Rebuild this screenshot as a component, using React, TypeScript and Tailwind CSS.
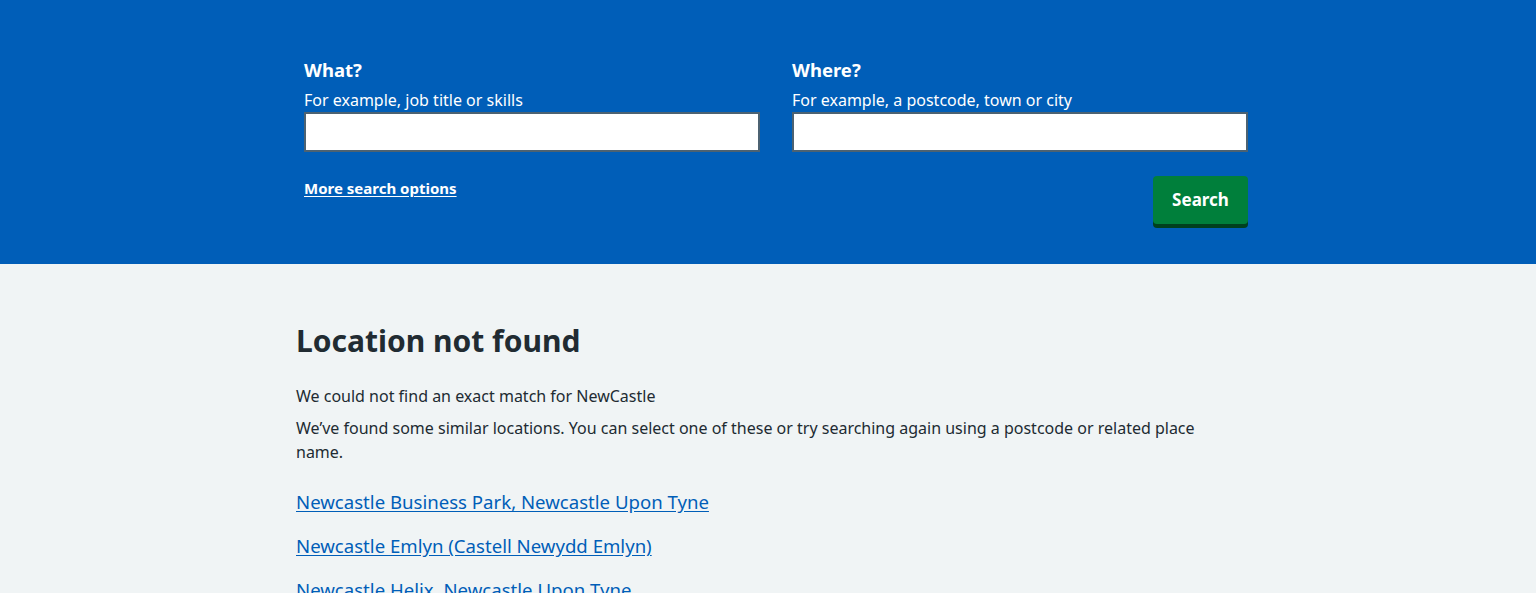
import React from "react";

const font = { fontFamily: '"Noto Sans", "Open Sans", Arial, sans-serif' };

export default function App() {
  return (
    <div className="min-h-[593px] bg-[#f0f4f5] text-[#212b32]" style={font}>
      <div className="bg-[#005eb8] pt-[56px] pb-[40px] text-white">
        <div className="mx-auto w-[960px] pl-4">
          <div className="grid grid-cols-2 gap-8">
            <div>
              <label className="block text-[18.5px] font-bold leading-[28px]">What?</label>
              <div className="mt-1 text-[16px] leading-[24px]">For example, job title or skills</div>
              <input className="block h-10 w-full border-2 border-[#4c6272] bg-white px-2 text-[#212b32] outline-none" />
            </div>
            <div>
              <label className="block text-[18.5px] font-bold leading-[28px]">Where?</label>
              <div className="mt-1 text-[16px] leading-[24px]">For example, a postcode, town or city</div>
              <input className="block h-10 w-full border-2 border-[#4c6272] bg-white px-2 text-[#212b32] outline-none" />
            </div>
          </div>
          <div className="mt-6 flex items-start justify-between">
            <a href="#" className="text-[15px] font-bold leading-[24px] text-white underline underline-offset-2">
              More search options
            </a>
            <button className="h-12 w-[95px] rounded-[4px] bg-[#007f3b] text-[17px] font-bold text-white shadow-[0_4px_0_#00401e]">
              Search
            </button>
          </div>
        </div>
      </div>
      <div className="mx-auto w-[960px] px-2 pt-[57px]">
        <h1 className="text-[30px] font-bold leading-[40px]">Location not found</h1>
        <p className="mt-[23px] text-[16px] leading-[24px]">We could not find an exact match for NewCastle</p>
        <p className="mt-2 text-[16px] leading-[24px]">
          We’ve found some similar locations. You can select one of these or try searching again using a postcode or related place name.
        </p>
        <ul className="mt-6 flex flex-col gap-4">
          <li>
            <a href="#" className="text-[18.6px] leading-[28px] text-[#005eb8] underline underline-offset-2">
              Newcastle Business Park, Newcastle Upon Tyne
            </a>
          </li>
          <li>
            <a href="#" className="text-[18.6px] leading-[28px] text-[#005eb8] underline underline-offset-2">
              Newcastle Emlyn (Castell Newydd Emlyn)
            </a>
          </li>
          <li>
            <a href="#" className="text-[18.6px] leading-[28px] text-[#005eb8] underline underline-offset-2">
              Newcastle Helix, Newcastle Upon Tyne
            </a>
          </li>
        </ul>
      </div>
    </div>
  );
}
